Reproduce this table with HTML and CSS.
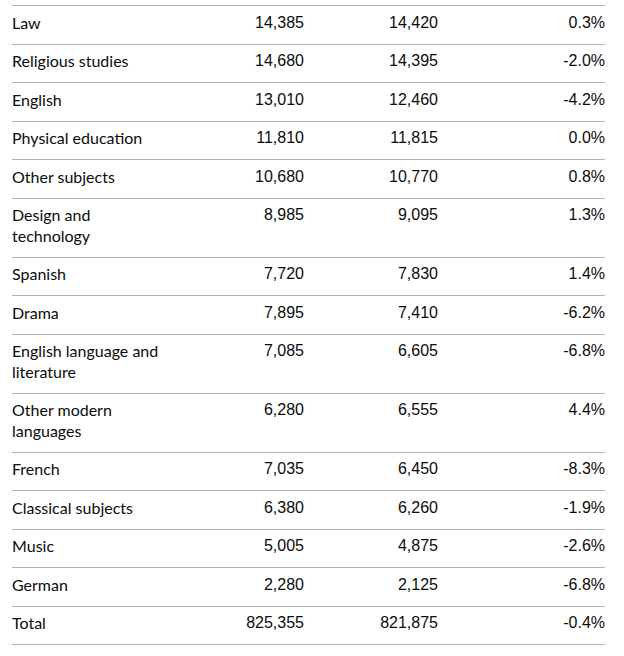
FILE: index.html
```html
<!DOCTYPE html>
<html lang="en">
<head>
<meta charset="utf-8">
<title>Entries by subject</title>
<link rel="stylesheet" href="styles.css">
</head>
<body>
<table class="table">
  <colgroup>
    <col class="col-subject">
    <col class="col-num">
    <col class="col-num2">
    <col class="col-change">
  </colgroup>
  <tbody>
    <tr><td class="cell">Law</td><td class="cell num">14,385</td><td class="cell num">14,420</td><td class="cell num last">0.3%</td></tr>
    <tr><td class="cell">Religious studies</td><td class="cell num">14,680</td><td class="cell num">14,395</td><td class="cell num last">-2.0%</td></tr>
    <tr><td class="cell">English</td><td class="cell num">13,010</td><td class="cell num">12,460</td><td class="cell num last">-4.2%</td></tr>
    <tr><td class="cell">Physical education</td><td class="cell num">11,810</td><td class="cell num">11,815</td><td class="cell num last">0.0%</td></tr>
    <tr><td class="cell">Other subjects</td><td class="cell num">10,680</td><td class="cell num">10,770</td><td class="cell num last">0.8%</td></tr>
    <tr><td class="cell">Design and technology</td><td class="cell num">8,985</td><td class="cell num">9,095</td><td class="cell num last">1.3%</td></tr>
    <tr><td class="cell">Spanish</td><td class="cell num">7,720</td><td class="cell num">7,830</td><td class="cell num last">1.4%</td></tr>
    <tr><td class="cell">Drama</td><td class="cell num">7,895</td><td class="cell num">7,410</td><td class="cell num last">-6.2%</td></tr>
    <tr><td class="cell">English language and literature</td><td class="cell num">7,085</td><td class="cell num">6,605</td><td class="cell num last">-6.8%</td></tr>
    <tr><td class="cell">Other modern languages</td><td class="cell num">6,280</td><td class="cell num">6,555</td><td class="cell num last">4.4%</td></tr>
    <tr><td class="cell">French</td><td class="cell num">7,035</td><td class="cell num">6,450</td><td class="cell num last">-8.3%</td></tr>
    <tr><td class="cell">Classical subjects</td><td class="cell num">6,380</td><td class="cell num">6,260</td><td class="cell num last">-1.9%</td></tr>
    <tr><td class="cell">Music</td><td class="cell num">5,005</td><td class="cell num">4,875</td><td class="cell num last">-2.6%</td></tr>
    <tr><td class="cell">German</td><td class="cell num">2,280</td><td class="cell num">2,125</td><td class="cell num last">-6.8%</td></tr>
    <tr><td class="cell">Total</td><td class="cell num">825,355</td><td class="cell num">821,875</td><td class="cell num last">-0.4%</td></tr>
  </tbody>
</table>
</body>
</html>
```
FILE: styles.css
```css
html, body {
  background: #ffffff;
}
body {
  margin: 0;
  padding: 5px 0 0 12px;
  color: #0b0c0c;
  font-family: Lato, "Liberation Sans", sans-serif;
  font-size: 16px;
}
.table {
  width: 593px;
  table-layout: fixed;
  border-collapse: collapse;
  border-spacing: 0;
  border-top: 1px solid #b1b4b6;
}
.col-subject { width: 170px; }
.col-num { width: 142px; }
.col-num2 { width: 134px; }
.col-change { width: 147px; }
.cell {
  padding: 6.5px 20px 10.5px 0;
  line-height: 20.5px;
  text-align: left;
  vertical-align: top;
  border-bottom: 1px solid #b1b4b6;
}
.num {
  text-align: right;
  font-family: "Liberation Sans", Arial, sans-serif;
}
.last {
  padding-right: 0;
}
```
